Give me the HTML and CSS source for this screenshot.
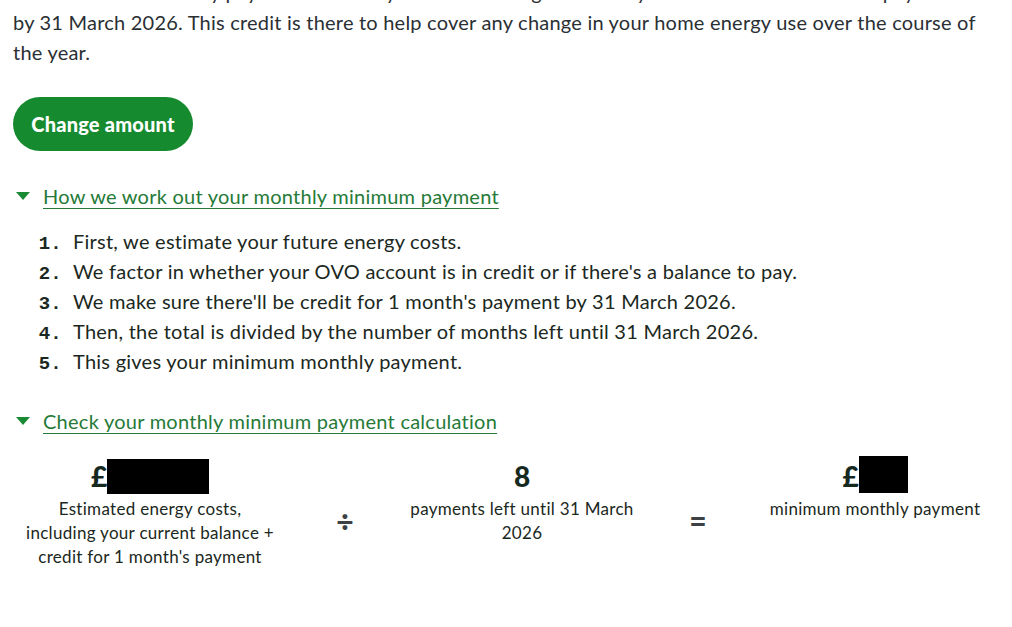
FILE: index.html
```html
<!DOCTYPE html>
<html>
<head>
<meta charset="utf-8">
<link rel="stylesheet" href="styles.css">
</head>
<body>
	<div class="page">
		<p class="intro">Your minimum monthly payment is set so you'll have enough credit in your account for 1 month's payment<br>
			by 31 March 2026. This credit is there to help cover any change in your home energy use over the course of
			the year.</p>

		<button class="btn-change">Change amount</button>

		<details class="explain" open>
			<summary><span class="summary-link">How we work out your monthly minimum payment</span></summary>
			<ol class="steps">
				<li>First, we estimate your future energy costs.</li>
				<li>We factor in whether your OVO account is in credit or if there's a balance to pay.</li>
				<li>We make sure there'll be credit for 1 month's payment by 31 March 2026.</li>
				<li>Then, the total is divided by the number of months left until 31 March 2026.</li>
				<li>This gives your minimum monthly payment.</li>
			</ol>
		</details>

		<details class="explain" open>
			<summary><span class="summary-link">Check your monthly minimum payment calculation</span></summary>
			<div class="calc">
				<div class="calc-col">
					<div class="calc-value">£<span class="hidden-amount wide"></span></div>
					<div class="calc-label label-wide">Estimated energy costs, including your current balance + credit for 1 month's payment</div>
				</div>
				<div class="calc-op op-divide">÷</div>
				<div class="calc-col">
					<div class="calc-value">8</div>
					<div class="calc-label">payments left until 31 March 2026</div>
				</div>
				<div class="calc-op">=</div>
				<div class="calc-col">
					<div class="calc-value">£<span class="hidden-amount"></span></div>
					<div class="calc-label">minimum monthly payment</div>
				</div>
			</div>
		</details>
	</div>
</body>
</html>
```

FILE: styles.css
```css
body {
	margin: 0;
	font-family: Lato, "Noto Sans", sans-serif;
	background-color: #ffffff;
	color: #2a2f34;
	overflow: hidden;
}

.page {
	padding: 0 13px;
	margin-top: -23px;
}

.intro {
	margin: 0;
	font-size: 20px;
	line-height: 30px;
	letter-spacing: 0.22px;
	color: #2a2f34;
}

.btn-change {
	display: block;
	margin-top: 30px;
	width: 180px;
	height: 54px;
	border: none;
	border-radius: 27px;
	background-color: #168a2f;
	color: #ffffff;
	font-family: Lato, "Noto Sans", sans-serif;
	font-size: 20px;
	font-weight: 900;
	letter-spacing: 0.2px;
	cursor: pointer;
}

.explain {
	margin-top: 30px;
}

.explain summary {
	list-style: none;
	display: flex;
	align-items: center;
	height: 30px;
	cursor: pointer;
}

.explain summary::-webkit-details-marker {
	display: none;
}

.explain summary::before {
	content: "";
	width: 0;
	height: 0;
	margin-left: 3px;
	margin-right: 13px;
	border-left: 7px solid transparent;
	border-right: 7px solid transparent;
	border-top: 8px solid #1b8a34;
}

.summary-link {
	font-size: 20px;
	letter-spacing: 0.25px;
	color: #267a38;
	text-decoration: underline;
	text-underline-offset: 4px;
	text-decoration-thickness: 1px;
}

.steps {
	margin: 15px 0 0 0;
	padding-left: 60px;
	font-size: 20px;
	line-height: 30px;
	letter-spacing: 0.25px;
	color: #1b2821;
}

.steps li::marker {
	font-family: "Liberation Mono", monospace;
	font-size: 19px;
	font-weight: 700;
	letter-spacing: 0;
}

.calc {
	display: grid;
	grid-template-columns: 260px 122px 240px 112px 242px;
	margin-top: 23px;
	margin-left: 7px;
	text-align: center;
	color: #1b2821;
}

.calc-value {
	height: 34px;
	display: flex;
	align-items: center;
	justify-content: center;
	font-size: 28px;
	font-weight: 900;
	color: #16291f;
}

.hidden-amount {
	display: inline-block;
	width: 49px;
	height: 37px;
	background-color: #000000;
	margin-top: -3px;
}

.hidden-amount.wide {
	width: 102px;
	height: 35px;
	margin-top: 0;
}

.calc-label {
	margin-top: 4px;
	font-size: 17px;
	line-height: 24px;
	letter-spacing: 0.3px;
}

.label-wide {
	padding: 0 2px;
}

.calc-op {
	align-self: center;
	padding-top: 12px;
	font-size: 30px;
	font-weight: 900;
	color: #3d4146;
}

.op-divide {
	padding-left: 8px;
}
```
